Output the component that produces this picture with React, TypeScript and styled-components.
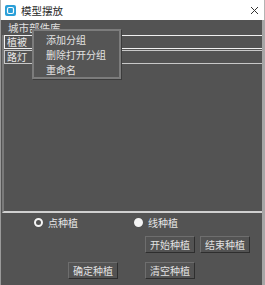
import React, { useState } from "react";
import styled, { createGlobalStyle } from "styled-components";

const GlobalStyle = createGlobalStyle`
  html, body {
    margin: 0;
    padding: 0;
    background: #535353;
  }
  body {
    font-family: "Noto Sans CJK SC", "Noto Sans", sans-serif;
  }
`;

const Window = styled.div`
  width: 265px;
  height: 285px;
  display: flex;
  flex-direction: column;
  background: #535353;
  overflow: hidden;
`;

const TitleBar = styled.div`
  height: 20px;
  flex: none;
  display: flex;
  align-items: center;
  background: #ffffff;
  padding: 0 0 0 4px;
  border-left: 1px solid #b4b4b4;
  border-right: 1px solid #b4b4b4;
`;

const TitleText = styled.span`
  font-size: 10.5px;
  color: #2a2a2a;
  margin-left: 5px;
  flex: 1;
`;

const CloseBtn = styled.span`
  width: 20px;
  display: flex;
  justify-content: center;
  align-items: center;
`;

const Body = styled.div`
  flex: 1;
  position: relative;
  display: flex;
  flex-direction: column;
  border-left: 1px solid #9a9a9a;
  border-right: 3px solid #a6a6a6;
`;

const LibLabel = styled.div`
  height: 15px;
  font-size: 10.5px;
  line-height: 15px;
  color: #e0e0e0;
  padding-left: 7px;
`;

const TreePanel = styled.div`
  height: 176px;
  margin-left: 1px;
  border-left: 2px solid #7a7a7a;
  border-bottom: 2px solid #d0d0d0;
  display: flex;
  flex-direction: column;
  gap: 1px;
`;

const TreeItem = styled.div<{ $strong?: boolean }>`
  height: 12px;
  font-size: 10px;
  line-height: 12px;
  color: #e8e8e8;
  padding-left: 2px;
  border: 1px solid ${(p) => (p.$strong ? "#f0f0f0" : "#c8c8c8")};
  border-right: none;
`;

const Menu = styled.div`
  position: absolute;
  left: 31px;
  top: 9px;
  width: 85px;
  height: 46px;
  background: #555555;
  border: 2px solid #7c7c7c;
  display: flex;
  flex-direction: column;
  justify-content: center;
  box-shadow: 1px 1px 0 #3c3c3c;
`;

const MenuItem = styled.div`
  height: 15px;
  line-height: 15px;
  font-size: 10px;
  color: #e2e2e2;
  padding-left: 12px;
`;

const RadioRow = styled.div`
  display: flex;
  height: 18px;
  align-items: center;
  margin-top: 0px;
`;

const RadioOption = styled.label<{ $offset: number }>`
  display: flex;
  align-items: center;
  gap: 5px;
  margin-left: ${(p) => p.$offset}px;
  font-size: 10px;
  color: #e6e6e6;
`;

const Dot = styled.span<{ $on: boolean }>`
  width: 5px;
  height: 5px;
  border-radius: 50%;
  border: 2px solid #f4f4f4;
  background: ${(p) => (p.$on ? "#f4f4f4" : "transparent")};
`;

const ButtonRow = styled.div<{ $left: number; $top: number }>`
  display: flex;
  gap: 5px;
  padding-left: ${(p) => p.$left}px;
  margin-top: ${(p) => p.$top}px;
`;

const Button = styled.button<{ $gapAfter?: number }>`
  width: 50px;
  height: 17px;
  padding: 0;
  margin-right: ${(p) => p.$gapAfter ?? 0}px;
  background: #535353;
  border: 1px solid;
  border-color: #6e6e6e #2e2e2e #2e2e2e #6e6e6e;
  color: #e2e2e2;
  font-family: "Noto Sans CJK SC", "Noto Sans", sans-serif;
  font-size: 10px;
  line-height: 15px;
`;

const AppIcon = () => (
  <svg width="11" height="11" viewBox="0 0 11 11">
    <rect x="0" y="0" width="11" height="11" rx="2" fill="#2a9fd8" />
    <rect x="2.5" y="2.5" width="6" height="6" rx="1.5" fill="none" stroke="#fff" strokeWidth="1.2" />
  </svg>
);

const App: React.FC = () => {
  const [mode, setMode] = useState<"point" | "line">("line");

  return (
    <Window>
      <GlobalStyle />
      <TitleBar>
        <AppIcon />
        <TitleText>模型摆放</TitleText>
        <CloseBtn>
          <svg width="9" height="9" viewBox="0 0 9 9">
            <path d="M1 1L8 8M8 1L1 8" stroke="#333" strokeWidth="1" />
          </svg>
        </CloseBtn>
      </TitleBar>
      <Body>
        <LibLabel>城市部件库</LibLabel>
        <TreePanel>
          <TreeItem $strong>植被</TreeItem>
          <TreeItem>路灯</TreeItem>
        </TreePanel>
        <Menu>
          <MenuItem>添加分组</MenuItem>
          <MenuItem>删除打开分组</MenuItem>
          <MenuItem>重命名</MenuItem>
        </Menu>
        <RadioRow>
          <RadioOption $offset={33} onClick={() => setMode("point")}>
            <Dot $on={mode === "point"} />
            点种植
          </RadioOption>
          <RadioOption $offset={56} onClick={() => setMode("line")}>
            <Dot $on={mode === "line"} />
            线种植
          </RadioOption>
        </RadioRow>
        <ButtonRow $left={144} $top={5}>
          <Button>开始种植</Button>
          <Button>结束种植</Button>
        </ButtonRow>
        <ButtonRow $left={67} $top={9}>
          <Button $gapAfter={22}>确定种植</Button>
          <Button>清空种植</Button>
        </ButtonRow>
      </Body>
    </Window>
  );
};

export default App;
